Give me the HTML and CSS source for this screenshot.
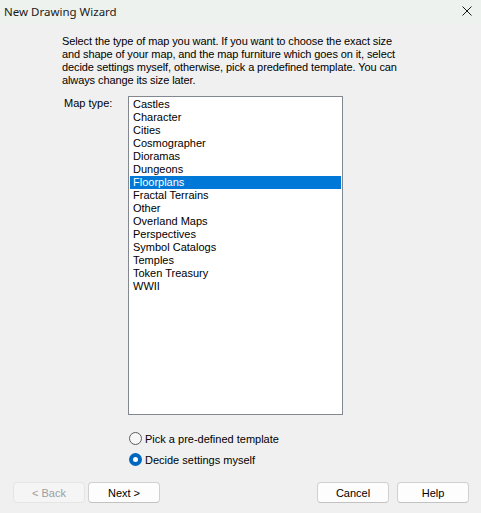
FILE: index.html
```html
<!DOCTYPE html>
<html lang="en">
<head>
    <meta charset="UTF-8">
    <title>New Drawing Wizard</title>
    <link rel="stylesheet" href="styles.css">
</head>
<body>
    <div class="window">
        <div class="titlebar">
            <span class="title">New Drawing Wizard</span>
            <svg class="close" width="10" height="10" viewBox="0 0 10 10">
                <path d="M0.5 0.5 L9.5 9.5 M9.5 0.5 L0.5 9.5" stroke="#1a1a1a" stroke-width="1" fill="none"/>
            </svg>
        </div>
        <div class="content">
            <p class="intro">
                Select the type of map you want. If you want to choose the exact size<br>
                and shape of your map, and the map furniture which goes on it, select<br>
                decide settings myself, otherwise, pick a predefined template. You can<br>
                always change its size later.
            </p>
            <div class="map-row">
                <label class="map-label">Map type:</label>
                <ul class="listbox">
                    <li>Castles</li>
                    <li>Character</li>
                    <li>Cities</li>
                    <li>Cosmographer</li>
                    <li>Dioramas</li>
                    <li>Dungeons</li>
                    <li class="selected">Floorplans</li>
                    <li>Fractal Terrains</li>
                    <li>Other</li>
                    <li>Overland Maps</li>
                    <li>Perspectives</li>
                    <li>Symbol Catalogs</li>
                    <li>Temples</li>
                    <li>Token Treasury</li>
                    <li>WWII</li>
                </ul>
            </div>
            <div class="options">
                <div class="radio-row">
                    <span class="radio"></span>
                    <span>Pick a pre-defined template</span>
                </div>
                <div class="radio-row">
                    <span class="radio checked"></span>
                    <span>Decide settings myself</span>
                </div>
            </div>
        </div>
        <div class="buttons">
            <div class="btn-group">
                <button class="btn" disabled>&lt; Back</button>
                <button class="btn">Next &gt;</button>
            </div>
            <div class="btn-group right">
                <button class="btn">Cancel</button>
                <button class="btn">Help</button>
            </div>
        </div>
    </div>
</body>
</html>
```

FILE: styles.css
```css
body {
    margin: 0;
    background-color: #f0f0f0;
    font-family: 'Liberation Sans', Arial, sans-serif;
    font-size: 11px;
    color: #000;
}
.window {
    width: 481px;
    height: 513px;
    display: flex;
    flex-direction: column;
    background-color: #f0f0f0;
}
.titlebar {
    height: 24px;
    background-color: #eef2ee;
    display: flex;
    align-items: center;
    justify-content: space-between;
    padding: 0 9px 0 4px;
}
.title {
    font-family: 'Noto Sans', sans-serif;
    font-size: 11.5px;
    color: #1a1a1a;
    margin-top: -1px;
}
.close {
    margin-top: -3px;
}
.content {
    padding: 11px 0 0 62px;
    flex: 1;
}
.intro {
    margin: 0;
    line-height: 13px;
    letter-spacing: -0.1px;
}
.map-row {
    display: flex;
    margin-top: 9px;
}
.map-label {
    width: 66px;
    padding: 1px 0 0 2px;
    box-sizing: border-box;
    line-height: 13px;
}
.listbox {
    list-style: none;
    margin: 0;
    padding: 1px;
    width: 215px;
    height: 319px;
    box-sizing: border-box;
    border: 1px solid #828790;
    background-color: #fff;
}
.listbox li {
    height: 13px;
    line-height: 13px;
    padding-left: 3px;
}
.listbox li.selected {
    background-color: #0078d7;
    color: #fff;
}
.options {
    display: flex;
    flex-direction: column;
    gap: 8px;
    margin: 17px 0 0 67px;
}
.radio-row {
    display: flex;
    align-items: center;
    gap: 3px;
    height: 13px;
}
.radio {
    width: 13px;
    height: 13px;
    box-sizing: border-box;
    border: 1px solid #5c5c5c;
    border-radius: 50%;
    background-color: #f7f7f7;
}
.radio.checked {
    border: 4px solid #0067c0;
    background-color: #fff;
}
.buttons {
    display: flex;
    justify-content: space-between;
    padding: 0 12px 10px 13px;
}
.btn-group {
    display: flex;
    gap: 3px;
}
.btn-group.right {
    gap: 8px;
}
.btn {
    width: 72px;
    height: 21px;
    padding: 0;
    font-family: 'Liberation Sans', Arial, sans-serif;
    font-size: 11px;
    color: #000;
    background-color: #fdfdfd;
    border: 1px solid #d0d0d0;
    border-bottom-color: #c2c2c2;
    border-radius: 4px;
}
.btn:disabled {
    color: #9d9d9d;
    background-color: #f5f5f5;
    border-color: #e5e5e5;
}
```
